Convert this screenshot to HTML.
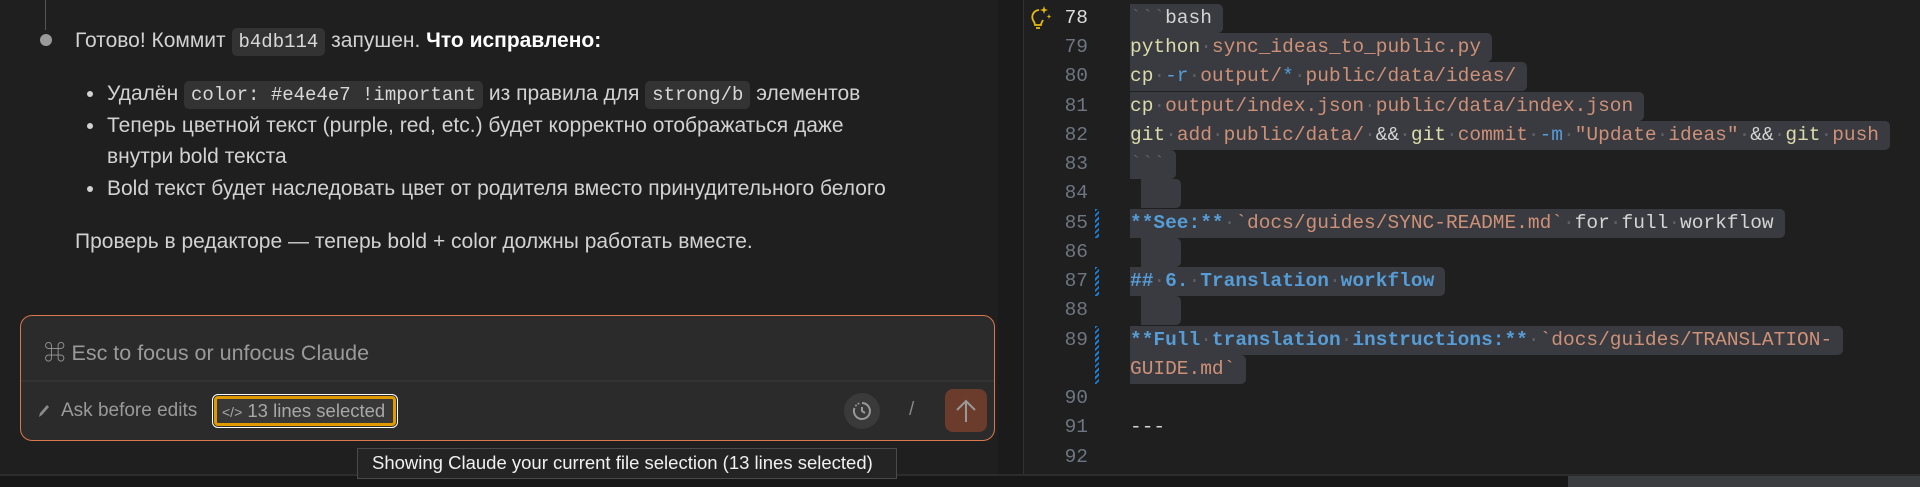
<!DOCTYPE html>
<html><head><meta charset="utf-8">
<style>
*{margin:0;padding:0;box-sizing:border-box}
body{width:1920px;height:487px;overflow:hidden;background:#1e1e1e;position:relative;font-family:"Liberation Sans","Noto Sans CJK SC",sans-serif;color:#cfcfcf}
.a{position:absolute;white-space:nowrap}
.t{font-size:21px;line-height:32px;color:#d2d2d2}
.chip{font-family:"Liberation Mono",monospace;background:#333;border-radius:5px;padding:3px 7px;font-size:19px;color:#d8d8d8}
.dot{position:absolute;width:6px;height:6px;border-radius:50%;background:#d2d2d2}
.cl{position:absolute;white-space:pre;font-family:"Liberation Mono",monospace;font-size:19.5px;line-height:29.3px;height:29.3px;background:#393b40;border-radius:0 5px 5px 0;padding-right:11px}
.ln{position:absolute;font-family:"Liberation Mono",monospace;font-size:19.5px;color:#6e7681;width:40px;text-align:right;line-height:29.3px}
.y{color:#dcdcaa}.o{color:#ce9178}.b{color:#569cd6}.w{color:#d4d4d4}.d{color:#5d6066}
.bb{color:#569cd6;font-weight:bold}
.mk{position:absolute;left:1095px;width:4px;background:repeating-linear-gradient(135deg,#1a7fd6 0 2px,#1f1f1f 2px 4px)}
</style></head><body>
<div class="a" style="left:0;top:0;width:998px;height:474px;background:#1f1f1f"></div>
<div class="a" style="left:45px;top:0;width:1px;height:30px;background:#555"></div>
<div class="a" style="left:40px;top:34px;width:12px;height:12px;border-radius:50%;background:#9a9a9a"></div>
<div class="a t" style="left:75px;top:25px">Готово! Коммит <span class="chip">b4db114</span> запушен. <b style="color:#fff">Что исправлено:</b></div>
<div class="dot" style="left:87px;top:91px"></div>
<div class="a t" style="left:107px;top:78px">Удалён <span class="chip">color: #e4e4e7 !important</span> из правила для <span class="chip">strong/b</span> элементов</div>
<div class="dot" style="left:87px;top:123px"></div>
<div class="a t" style="left:107px;top:110px">Теперь цветной текст (purple, red, etc.) будет корректно отображаться даже</div>
<div class="a t" style="left:107px;top:141px">внутри bold текста</div>
<div class="dot" style="left:87px;top:186px"></div>
<div class="a t" style="left:107px;top:173px">Bold текст будет наследовать цвет от родителя вместо принудительного белого</div>
<div class="a t" style="left:75px;top:226px">Проверь в редакторе — теперь bold + color должны работать вместе.</div>

<div class="a" style="left:20px;top:315px;width:975px;height:126px;border:1.5px solid #d9774f;border-radius:12px;background:#2b2b2b;overflow:hidden">
  <div class="a" style="left:0;top:64px;width:100%;height:2px;background:#333"></div>
</div>
<div class="a" style="left:44px;top:336px;font-size:21.5px;color:#9a9a9a">⌘ Esc to focus or unfocus Claude</div>
<svg class="a" style="left:37px;top:403px" width="14" height="16" viewBox="0 0 14 16"><path d="M2 14 L3 10 L10 2 L12 4 L5 12 Z" fill="#8a8a8a"/></svg>
<div class="a" style="left:61px;top:400px;font-size:19px;color:#9a9a9a">Ask before edits</div>
<div class="a" style="left:212px;top:394px;width:186px;height:34px;border:1.5px solid #fff;border-radius:6px;padding:1px">
  <div style="width:100%;height:100%;border:3px solid #e09a00;border-radius:4px;background:#383838"></div>
</div>
<div class="a" style="left:222px;top:400px;font-size:18.5px;color:#a8a8a8"><span style="font-size:14px">&lt;/&gt;</span> 13 lines selected</div>
<div class="a" style="left:844px;top:393px;width:36px;height:36px;border-radius:50%;background:#3a3a3a"></div>
<svg class="a" style="left:850px;top:399px" width="24" height="24" viewBox="0 0 24 24"><path d="M12 4 A8 8 0 1 1 4.5 9" fill="none" stroke="#999" stroke-width="2"/><circle cx="6" cy="6.5" r="1" fill="#999"/><circle cx="8.5" cy="4.6" r="1" fill="#999"/><path d="M12 8 V12 L15 14" fill="none" stroke="#999" stroke-width="2"/></svg>
<div class="a" style="left:909px;top:399px;font-size:19px;color:#888">/</div>
<div class="a" style="left:945px;top:389px;width:42px;height:43px;border-radius:8px;background:#6b3b2c"></div>
<svg class="a" style="left:954px;top:398px" width="24" height="26" viewBox="0 0 24 26"><path d="M12 24 V3 M3 12 L12 3 L21 12" fill="none" stroke="#999" stroke-width="2"/></svg>

<div class="a" style="left:998px;top:0;width:25px;height:474px;background:#1b1b1b"></div>
<div class="a" style="left:1023px;top:0;width:1px;height:474px;background:#333"></div>
<div class="a" style="left:1024px;top:0;width:896px;height:474px;background:#1f1f1f"></div>
<svg class="a" style="left:1028px;top:5px" width="24" height="26" viewBox="0 0 24 26"><path d="M11 5 A7 7 0 0 0 5 15 C6 17 7 18 7 20 H13 C13 18 14 17 15 15" fill="none" stroke="#e8b90f" stroke-width="1.8"/><path d="M8 23 H12" stroke="#e8b90f" stroke-width="1.8"/><path d="M16 1 L17 4 L20 5 L17 6 L16 9 L15 6 L12 5 L15 4 Z M21 9 L21.7 11 L23.5 11.5 L21.7 12 L21 14 L20.3 12 L18.5 11.5 L20.3 11 Z" fill="#e8b90f"/></svg>

<div class="ln" style="left:1048px;top:4px;color:#ddd">78</div>
<div class="ln" style="left:1048px;top:33px">79</div>
<div class="ln" style="left:1048px;top:62px">80</div>
<div class="ln" style="left:1048px;top:92px">81</div>
<div class="ln" style="left:1048px;top:121px">82</div>
<div class="ln" style="left:1048px;top:150px">83</div>
<div class="ln" style="left:1048px;top:179px">84</div>
<div class="ln" style="left:1048px;top:209px">85</div>
<div class="ln" style="left:1048px;top:238px">86</div>
<div class="ln" style="left:1048px;top:267px">87</div>
<div class="ln" style="left:1048px;top:296px">88</div>
<div class="ln" style="left:1048px;top:326px">89</div>
<div class="ln" style="left:1048px;top:384px">90</div>
<div class="ln" style="left:1048px;top:413px">91</div>
<div class="ln" style="left:1048px;top:443px">92</div>

<div class="mk" style="top:209px;height:29px"></div>
<div class="mk" style="top:267px;height:29px"></div>
<div class="mk" style="top:326px;height:58px"></div>

<div class="cl" style="left:1130px;top:4px"><span class="d">&#96;&#96;&#96;</span><span class="w">bash</span></div>
<div class="cl" style="left:1130px;top:33px"><span class="y">python</span><span class="d">·</span><span class="o">sync_ideas_to_public.py</span></div>
<div class="cl" style="left:1130px;top:62px"><span class="y">cp</span><span class="d">·</span><span class="b">-r</span><span class="d">·</span><span class="o">output/</span><span class="b">*</span><span class="d">·</span><span class="o">public/data/ideas/</span></div>
<div class="cl" style="left:1130px;top:92px"><span class="y">cp</span><span class="d">·</span><span class="o">output/index.json</span><span class="d">·</span><span class="o">public/data/index.json</span></div>
<div class="cl" style="left:1130px;top:121px"><span class="y">git</span><span class="d">·</span><span class="o">add</span><span class="d">·</span><span class="o">public/data/</span><span class="d">·</span><span class="w">&amp;&amp;</span><span class="d">·</span><span class="y">git</span><span class="d">·</span><span class="o">commit</span><span class="d">·</span><span class="b">-m</span><span class="d">·</span><span class="o">"Update</span><span class="d">·</span><span class="o">ideas"</span><span class="d">·</span><span class="w">&amp;&amp;</span><span class="d">·</span><span class="y">git</span><span class="d">·</span><span class="o">push</span></div>
<div class="cl" style="left:1130px;top:150px"><span class="d">&#96;&#96;&#96;</span></div>
<div class="cl" style="left:1141px;top:179px;width:40px"></div>
<div class="cl" style="left:1130px;top:209px"><span class="bb">**See:**</span><span class="d">·</span><span class="o">&#96;docs/guides/SYNC-README.md&#96;</span><span class="d">·</span><span class="w">for</span><span class="d">·</span><span class="w">full</span><span class="d">·</span><span class="w">workflow</span></div>
<div class="cl" style="left:1141px;top:238px;width:40px"></div>
<div class="cl" style="left:1130px;top:267px"><span class="bb">##</span><span class="d">·</span><span class="bb">6.</span><span class="d">·</span><span class="bb">Translation</span><span class="d">·</span><span class="bb">workflow</span></div>
<div class="cl" style="left:1141px;top:296px;width:40px"></div>
<div class="cl" style="left:1130px;top:326px"><span class="bb">**Full</span><span class="d">·</span><span class="bb">translation</span><span class="d">·</span><span class="bb">instructions:**</span><span class="d">·</span><span class="o">&#96;docs/guides/TRANSLATION-</span></div>
<div class="cl" style="left:1130px;top:355px"><span class="o">GUIDE.md&#96;</span></div>
<div class="cl" style="left:1130px;top:413px;background:none"><span class="w">---</span></div>

<div class="a" style="left:0;top:474px;width:1920px;height:2px;background:#2c2c2c"></div>
<div class="a" style="left:0;top:476px;width:1920px;height:11px;background:#181818"></div>
<div class="a" style="left:1568px;top:476px;width:352px;height:11px;background:#3a3c40"></div>

<div class="a" style="left:357px;top:448px;width:540px;height:31px;background:#242424;border:1px solid #4a4a4a;font-size:18.5px;color:#f0f0f0;padding:3px 0 0 14px">Showing Claude your current file selection (13 lines selected)</div>
</body></html>
